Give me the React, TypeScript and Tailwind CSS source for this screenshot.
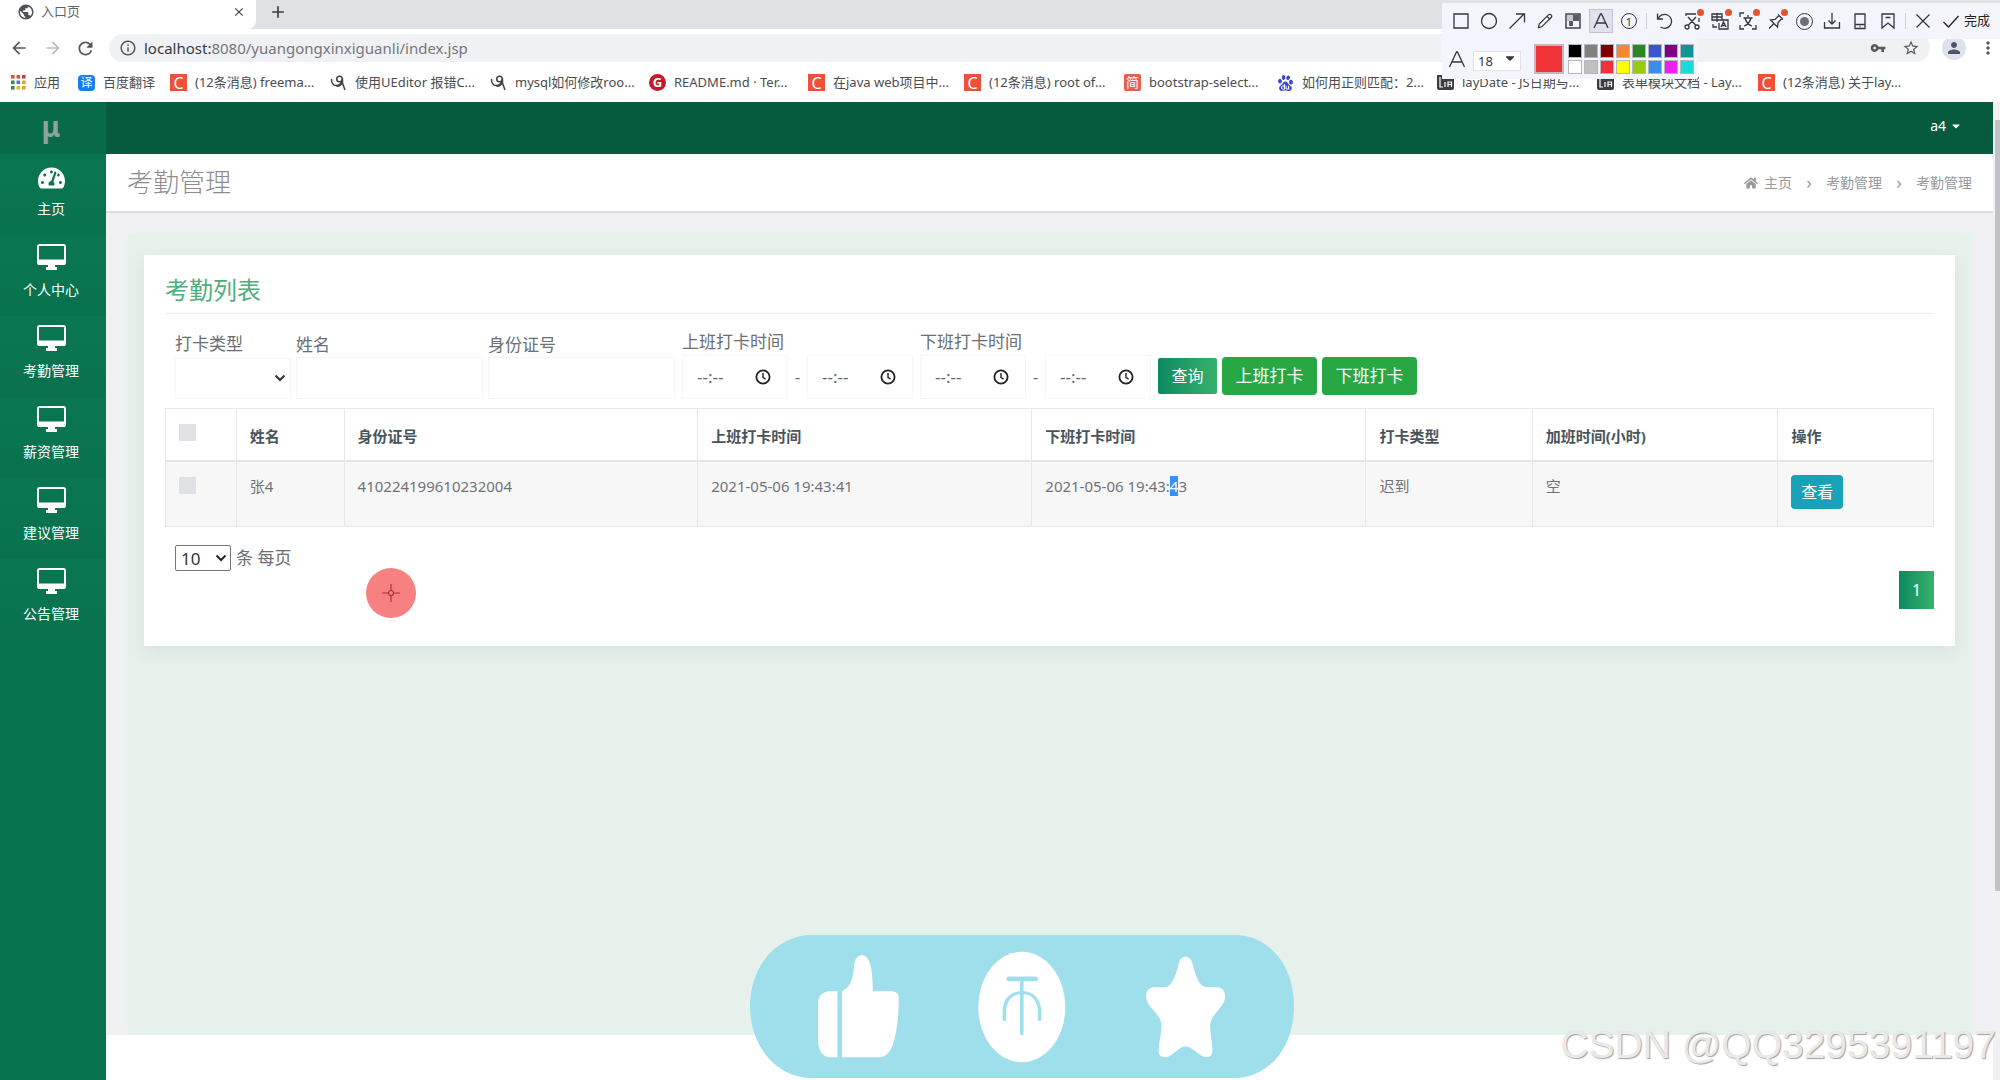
import type { ReactNode } from 'react';
import { Pencil } from 'lucide-react';
import { FaCaretDown, FaHome, FaTachometerAlt } from 'react-icons/fa';
import {
  MdAdd,
  MdArrowBack,
  MdArrowForward,
  MdClose,
  MdInfoOutline,
  MdMoreVert,
  MdPerson,
  MdPublic,
  MdRefresh,
  MdStarBorder,
  MdVpnKey,
} from 'react-icons/md';
import { SiBaidu } from 'react-icons/si';

const DesktopIcon = () => (
  <svg viewBox="0 0 29 26" className="h-[26px] w-[29px]" aria-hidden="true">
    <rect x="1" y="1" width="27" height="19" rx="1.5" fill="none" stroke="#fff" strokeWidth="2" />
    <path d="M1 15.5h27V20a1 1 0 0 1-1 1H2a1 1 0 0 1-1-1z" fill="#fff" />
    <path d="M11 21h7v2h2v3H9v-3h2z" fill="#fff" />
  </svg>
);

const ClockIcon = () => (
  <svg viewBox="0 0 16 16" className="h-4 w-4 shrink-0" fill="none" stroke="#222" strokeWidth="1.8" aria-hidden="true">
    <circle cx="8" cy="8" r="6.6" />
    <path d="M8 4v4.3l2.6 2" strokeWidth="1.4" />
  </svg>
);

/* ---------- bookmark icons ---------- */

const CIcon = () => (
  <span className="flex h-[17px] w-[17px] shrink-0 items-center justify-center bg-[#ee5039] text-base leading-none text-white">C</span>
);

const PawIcon = () => (
  <svg viewBox="0 0 16 16" className="h-4 w-[17px] shrink-0" fill="none" stroke="#444" strokeWidth="1.5" aria-hidden="true">
    <circle cx="9" cy="4" r="2.8" />
    <path d="M1 4c0 4 1.500 6.500 4.500 6.500S12 8 12 3.500V8l2.500 7M5 10.500c3 2 6-1 7-3" />
  </svg>
);

const LayIcon = () => (
  <svg viewBox="0 0 17 17" className="h-[17px] w-[17px] shrink-0" aria-hidden="true">
    <path d="M0 1h6v4h11v9a2 2 0 0 1-2 2H2a2 2 0 0 1-2-2z" fill="#3a3d42" />
    <path d="M3 3v10h3M8 13V8M11 13V8h3.500v5M11 10.500h3.500" stroke="#fff" strokeWidth="1.2" fill="none" />
  </svg>
);

const AppsIcon = () => {
  const dots = ['#d9503f', '#d9503f', '#c0404a', '#3c8a4e', '#4a7fd0', '#d6a92c', '#3c8a4e', '#d6c02c', '#d6a92c'];
  return (
    <svg viewBox="0 0 15 15" className="h-[15px] w-[15px] shrink-0" aria-hidden="true">
      {dots.map((c, i) => (
        <rect key={i} x={(i % 3) * 5.5} y={Math.floor(i / 3) * 5.5} width="3.6" height="3.6" fill={c} />
      ))}
    </svg>
  );
};

type BookmarkItem = { icon: ReactNode; text: string; width: string };

const bookmarks: BookmarkItem[] = [
  { icon: <AppsIcon />, text: '应用', width: 'w-[67px]' },
  {
    icon: <span className="flex h-4 w-[17px] shrink-0 items-center justify-center rounded-sm bg-[#1b7cf0] text-xs leading-none text-white">译</span>,
    text: '百度翻译',
    width: 'w-[92px]',
  },
  { icon: <CIcon />, text: '(12条消息) freema...', width: 'w-[160px]' },
  { icon: <PawIcon />, text: '使用UEditor 报错C...', width: 'w-[160px]' },
  { icon: <PawIcon />, text: 'mysql如何修改roo...', width: 'w-[159px]' },
  {
    icon: <span className="flex h-[17px] w-[17px] shrink-0 items-center justify-center rounded-full bg-[#c2192f] text-[13px] font-bold leading-none text-white">G</span>,
    text: 'README.md · Ter...',
    width: 'w-[159px]',
  },
  { icon: <CIcon />, text: '在java web项目中...', width: 'w-[156px]' },
  { icon: <CIcon />, text: '(12条消息) root of...', width: 'w-[160px]' },
  {
    icon: <span className="flex h-[17px] w-[17px] shrink-0 items-center justify-center rounded-xs bg-[#e5604d] text-[13px] leading-none text-white">简</span>,
    text: 'bootstrap-select...',
    width: 'w-[153px]',
  },
  { icon: <SiBaidu className="h-4 w-[17px] shrink-0 text-[#3a46d8]" />, text: '如何用正则匹配：2...', width: 'w-[160px]' },
  { icon: <LayIcon />, text: 'layDate - JS日期与...', width: 'w-[160px]' },
  { icon: <LayIcon />, text: '表单模块文档 - Lay...', width: 'w-[161px]' },
  { icon: <CIcon />, text: '(12条消息) 关于lay...', width: 'w-[160px]' },
];

const Browser = () => (
  <div className="bg-white">
    <div className="flex h-[29px] bg-[#dfe1e5]">
      <div className="flex w-[256px] items-center rounded-br-lg bg-white pb-[5px] pl-[17px] pr-[10px] text-[13px] text-[#5f6368]">
        <MdPublic className="h-[18px] w-[18px] text-[#50545a]" />
        <span className="ml-[6px] flex-1">入口页</span>
        <button type="button" aria-label="关闭标签页"><MdClose className="h-[14px] w-[14px] text-[#3c4043]" /></button>
      </div>
      <button type="button" aria-label="新标签页" className="ml-3 pb-[5px]"><MdAdd className="h-5 w-5 text-[#3c4043]" /></button>
    </div>
    <div className="flex h-[38px] items-center pl-[9px] pr-[2px] text-[#55585c]">
      <button type="button" aria-label="后退"><MdArrowBack className="h-5 w-5" /></button>
      <button type="button" aria-label="前进" className="ml-[14px]"><MdArrowForward className="h-5 w-5 text-[#bbbdc0]" /></button>
      <button type="button" aria-label="刷新" className="ml-3"><MdRefresh className="h-[21px] w-[21px]" /></button>
      <div className="ml-[13px] flex h-7 flex-1 items-center rounded-full bg-[#f0f1f4] pl-[10px] pr-[10px]">
        <MdInfoOutline className="h-[18px] w-[18px]" />
        <span className="ml-[7px] flex-1 text-[15px] text-[#74777b]">
          <span className="text-[#37393c]">localhost:</span>8080/yuangongxinxiguanli/index.jsp
        </span>
        <MdVpnKey className="h-4 w-4" />
        <MdStarBorder className="ml-4 h-[18px] w-[18px]" />
      </div>
      <span className="ml-3 flex h-6 w-6 items-center justify-center rounded-full bg-[#dfe2ec]">
        <MdPerson className="h-[18px] w-[18px] text-[#4c5467]" />
      </span>
      <MdMoreVert className="ml-3 h-5 w-5" />
    </div>
    <nav className="flex h-[35px] items-center overflow-hidden pb-1 pl-[11px] text-[13px] text-[#4a4c50]">
      {bookmarks.map((b, i) => (
        <a key={i} href="#" className={`flex shrink-0 items-center gap-2 whitespace-nowrap ${b.width}`}>
          {b.icon}
          {b.text}
        </a>
      ))}
    </nav>
  </div>
);

/* ---------- floating annotation toolbar ---------- */

const swatches = [
  'bg-black', 'bg-[#808080]', 'bg-[#800000]', 'bg-[#f58634]', 'bg-[#2c8526]', 'bg-[#3b55d0]', 'bg-[#800080]', 'bg-[#119494]',
  'bg-white', 'bg-[#c0c0c0]', 'bg-[#f03338]', 'bg-[#ffff00]', 'bg-[#99cc11]', 'bg-[#3a8ee6]', 'bg-[#ee1ff0]', 'bg-[#18dbdb]',
];

const Tool = ({ label, dot, active, children }: { label: string; dot?: boolean; active?: boolean; children: ReactNode }) => (
  <button
    type="button"
    aria-label={label}
    className={`relative flex h-[22px] w-[22px] shrink-0 items-center justify-center ${active ? 'bg-[#dfe1ec] outline outline-[#bfc2d0]' : ''}`}
  >
    {children}
    {dot && <span className="absolute -right-px -top-px h-[7px] w-[7px] rounded-full bg-[#e8532b]" />}
  </button>
);

// line drawing on an 18px grid
const Glyph = ({ d }: { d: string }) => (
  <svg viewBox="0 0 18 18" className="h-[18px] w-[18px]" fill="none" stroke="currentColor" strokeWidth="1.3" aria-hidden="true">
    <path d={d} />
  </svg>
);

const Annotator = () => (
  <div className="absolute right-0 top-[3px] w-[558px] text-[#33363f]">
    <div className="flex h-9 items-center gap-[6px] bg-[#f4f5fc] pl-2">
      <Tool label="矩形"><Glyph d="M2 2h14v14H2z" /></Tool>
      <Tool label="椭圆"><Glyph d="M9 1.500a7.500 7.500 0 1 1 0 15a7.500 7.500 0 1 1 0-15z" /></Tool>
      <Tool label="箭头"><Glyph d="M1.500 16.500L16 2M8 2h8.500v8.500" /></Tool>
      <Tool label="画笔"><Pencil className="h-4 w-4" strokeWidth={1.8} /></Tool>
      <Tool label="马赛克">
        <svg viewBox="0 0 16 16" className="h-4 w-4" aria-hidden="true">
          <rect x="1" y="1" width="14" height="14" fill="#f4f5fc" stroke="currentColor" strokeWidth="1.4" />
          <path d="M2 2h6v6H2z" fill="#c9ccd8" />
          <path d="M8 2h6v6H8zM4 8h4v5H4z" fill="currentColor" opacity=".8" />
        </svg>
      </Tool>
      <Tool label="文字" active><Glyph d="M2 16L8.500 2h1L16 16M4.500 11h9" /></Tool>
      <Tool label="序号">
        <span className="flex h-4 w-4 items-center justify-center rounded-full border border-current text-[11px] leading-none">1</span>
      </Tool>
      <span className="h-4 w-px bg-[#d0d3de]" />
      <Tool label="撤销"><Glyph d="M2.500 1.500v5.500H8M3 7a7 7 0 1 1 2.500 8" /></Tool>
      <Tool label="裁剪" dot>
        <Glyph d="M3 4V2h10M16 6v4M5 5l7.500 8M13 5l-7.500 8M6 15a2 2 0 1 1-4 0a2 2 0 1 1 4 0M16 15a2 2 0 1 1-4 0a2 2 0 1 1 4 0" />
      </Tool>
      <Tool label="翻译" dot>
        <Glyph d="M1 2h10v6H1zM6 1v9M1 5h10M11 8h6v9H8v-6M10 15l2.500-5 2.500 5M11 13.500h3M2 12v3h4" />
      </Tool>
      <Tool label="识别文字" dot>
        <Glyph d="M1 5V1h4M1 13v4h4M13 17h4v-4M9 3v2M4.500 6h9M6 6c1 4 4 7 7 8M12 6c-1 4-4 7-7 8" />
      </Tool>
      <Tool label="固定" dot>
        <Glyph d="M11 2.500L16 7.500M12 3.500L8 7.500 3.500 8 10.500 15 11 10.500 15 6.500M7 11.500L2 16.500" />
      </Tool>
      <Tool label="录制">
        <span className="flex h-[17px] w-[17px] items-center justify-center rounded-full border border-current">
          <span className="h-[9px] w-[9px] rounded-full bg-[#6b6e7c]" />
        </span>
      </Tool>
      <Tool label="保存"><Glyph d="M9 1v11M5.500 8.500L9 12l3.500-3.500M1.500 10v6h15v-6" /></Tool>
      <Tool label="发送到手机"><Glyph d="M4 2h10v14.500H4zM4 12.500h10M8.500 14.500h1" /></Tool>
      <Tool label="收藏"><Glyph d="M3 2h12v14l-6-5-6 5zM6.500 5.500h5" /></Tool>
      <span className="h-4 w-px bg-[#d0d3de]" />
      <Tool label="取消"><Glyph d="M2.500 2.500l13 13M15.500 2.500l-13 13" /></Tool>
      <button type="button" className="ml-[2px] flex items-center gap-1 whitespace-nowrap text-[13px] text-[#222]">
        <Glyph d="M1.500 10L6.500 15 16.500 4" />
        完成
      </button>
    </div>
    <div className="flex h-10 w-[255px] items-start bg-[#f4f5fc] pl-[6px]">
      <div className="mt-[11px]"><Glyph d="M1.500 17L8.500 2h1L16.500 17M4 12h10" /></div>
      <label className="relative ml-[7px] mt-[9px]">
        <select aria-label="字号" className="h-5 w-12 appearance-none border border-[#e0e2ea] bg-white pl-1 text-[13px] leading-4">
          <option>18</option>
        </select>
        <FaCaretDown className="pointer-events-none absolute right-1 top-[3px] h-[14px] w-[14px]" />
      </label>
      <button type="button" aria-label="当前颜色" className="ml-[13px] mt-[5px] h-[30px] w-[30px] border-2 border-[#c3b8bd] bg-[#f03338]" />
      <div className="ml-1 mt-[5px] grid grid-cols-8 gap-[2px]">
        {swatches.map((c, i) => (
          <button key={i} type="button" aria-label={`颜色${i + 1}`} className={`h-[14px] w-[14px] border border-[#b5b7c0] ${c}`} />
        ))}
      </div>
    </div>
  </div>
);

/* ---------- page ---------- */

const menu = ['个人中心', '考勤管理', '薪资管理', '建议管理', '公告管理'];

const Sidebar = () => (
  <aside className="w-[106px] shrink-0 bg-[#08744f] text-sm text-white">
    <div className="flex h-[52px] items-center justify-center bg-[#076a49] pb-1 pr-1 text-[28px] font-bold text-[#8fa39b]">μ</div>
    <nav>
      <a href="#" className="flex h-[81px] flex-col items-center bg-linear-to-b from-[#0a7651] to-[#08724e] pr-1 pt-[11px]">
        <FaTachometerAlt className="h-[26px] w-[27px]" />
        <span className="mt-2 leading-5">主页</span>
      </a>
      {menu.map((m) => (
        <a key={m} href="#" className="flex h-[81px] flex-col items-center bg-linear-to-b from-[#0a7651] to-[#08724e] pr-1 pt-[9px]">
          <DesktopIcon />
          <span className="mt-[10px] leading-5">{m}</span>
        </a>
      ))}
    </nav>
  </aside>
);

const TimeInput = ({ id, label }: { id?: string; label: string }) => (
  <span className="flex h-11 w-[106px] items-center border border-[#f4f6f6] pl-[14px] pr-4">
    <input id={id} aria-label={label} placeholder="--:--" className="w-full min-w-0 text-[17px] text-[#666] outline-none placeholder:text-[#666]" />
    <ClockIcon />
  </span>
);

const TimeRange = ({ id, label }: { id: string; label: string }) => (
  <div className="mr-[2px] flex flex-col">
    <label htmlFor={id} className="mb-px leading-6">{label}</label>
    <div className="flex items-center">
      <TimeInput id={id} label={`${label} 开始`} />
      <span className="w-[19px] text-center">-</span>
      <TimeInput label={`${label} 结束`} />
    </div>
  </div>
);

const Filters = () => (
  <form className="flex items-end gap-[5px] pl-[10px] pt-4 text-[17px] text-[#6b6f73]">
    <div className="flex flex-col">
      <label htmlFor="type" className="mb-[2px] leading-6">打卡类型</label>
      <span className="relative">
        <select id="type" className="h-[41px] w-[116px] appearance-none border border-[#f4f6f6] bg-white" />
        <svg viewBox="0 0 12 8" className="pointer-events-none absolute right-[5px] top-4 h-2 w-3" fill="none" stroke="#333" strokeWidth="2" aria-hidden="true">
          <path d="M1.500 1.500L6 6l4.500-4.500" />
        </svg>
      </span>
    </div>
    <div className="flex flex-col">
      <label htmlFor="name" className="leading-6">姓名</label>
      <input id="name" className="h-[42px] w-[187px] border border-[#f4f6f6] px-3" />
    </div>
    <div className="mr-[2px] flex flex-col">
      <label htmlFor="idcard" className="leading-6">身份证号</label>
      <input id="idcard" className="h-[42px] w-[187px] border border-[#f4f6f6] px-3" />
    </div>
    <TimeRange id="on" label="上班打卡时间" />
    <TimeRange id="off" label="下班打卡时间" />
    <button type="button" className="mb-[5px] h-9 w-[59px] rounded-xs bg-linear-to-r from-[#078a60] to-[#36b26c] text-base text-white">查询</button>
    <button type="button" className="mb-1 h-[38px] w-[95px] rounded-sm bg-[#28a745] text-[17px] text-white">上班打卡</button>
    <button type="button" className="mb-1 h-[38px] w-[95px] rounded-sm bg-[#28a745] text-[17px] text-white">下班打卡</button>
  </form>
);

const columns = [
  { name: '姓名', width: 'w-[6.1%]' },
  { name: '身份证号', width: 'w-[20%]' },
  { name: '上班打卡时间', width: 'w-[18.9%]' },
  { name: '下班打卡时间', width: 'w-[18.9%]' },
  { name: '打卡类型', width: 'w-[9.4%]' },
  { name: '加班时间(小时)', width: 'w-[13.9%]' },
  { name: '操作', width: 'w-[8.8%]' },
];

const cell = 'border border-[#e6e8ea] px-[13px] text-left';
const box = 'block h-[17px] w-[17px] appearance-none bg-[#e0e1e4]';

const Records = () => (
  <table className="mt-[9px] w-full table-fixed border-collapse text-[15px] text-[#6f7377]">
    <thead>
      <tr className="h-[52px] border-b-2 border-[#e3e5e7] text-[#47545c]">
        <th className={`${cell} w-[4%] pb-1`}><input type="checkbox" aria-label="全选" className={box} /></th>
        {columns.map((c) => (
          <th key={c.name} className={`${cell} ${c.width} pt-1 font-bold`}>{c.name}</th>
        ))}
      </tr>
    </thead>
    <tbody>
      <tr className="h-[66px] bg-[#f7f7f8] align-top">
        <td className={`${cell} pt-[15px]`}><input type="checkbox" aria-label="选择 张4" className={box} /></td>
        <td className={`${cell} pt-[13px]`}>张4</td>
        <td className={`${cell} pt-[13px]`}>410224199610232004</td>
        <td className={`${cell} pt-[13px]`}>2021-05-06 19:43:41</td>
        <td className={`${cell} pt-[13px]`}>2021-05-06 19:43:<span className="bg-[#3390ff] text-white">4</span>3</td>
        <td className={`${cell} pt-[13px]`}>迟到</td>
        <td className={`${cell} pt-[13px]`}>空</td>
        <td className={`${cell} pt-[13px]`}>
          <button type="button" className="h-[34px] w-[52px] rounded-sm bg-[#17a2b8] text-base text-white">查看</button>
        </td>
      </tr>
    </tbody>
  </table>
);

const Card = () => (
  <section className="bg-white px-[21px] pb-[37px] pt-[17px] shadow-[0_6px_16px_rgba(0,60,40,0.08)]">
    <h2 className="border-b border-[#ececee] pb-[5px] text-2xl leading-9 text-[#4fae7b]">考勤列表</h2>
    <Filters />
    <Records />
    <label className="mt-[18px] flex items-center gap-[5px] pl-[10px] text-[17px] text-[#6b6f73]">
      <span className="relative flex">
        <select className="h-[26px] w-14 appearance-none rounded-xs border border-[#767676] bg-white pl-[5px] leading-none text-[#333]">
          <option>10</option>
        </select>
        <svg viewBox="0 0 12 8" className="pointer-events-none absolute right-1 top-[9px] h-2 w-3" fill="none" stroke="#222" strokeWidth="2" aria-hidden="true">
          <path d="M1.500 1.500L6 6l4.500-4.500" />
        </svg>
      </span>
      条 每页
    </label>
    <div className="flex justify-end">
      <button type="button" className="h-[38px] w-[35px] bg-linear-to-r from-[#078a60] to-[#36b26c] text-base text-white">1</button>
    </div>
  </section>
);

const Main = () => (
  <div className="flex min-w-0 flex-1 flex-col">
    <header className="flex h-[52px] items-center justify-end bg-[#065b3f] pr-[31px] text-sm text-white">
      <button type="button" className="flex items-center gap-1 pb-1">
        a4 <FaCaretDown className="h-3 w-3" />
      </button>
    </header>
    <div className="flex h-[59px] items-center justify-between border-b-2 border-[#dcdfe2] bg-white pl-[21px] pr-[21px]">
      <h1 className="text-[26px] font-light text-[#8d8d8d]">考勤管理</h1>
      <nav className="flex items-center text-sm text-[#97999c]">
        <FaHome className="h-[14px] w-[14px]" />
        <a href="#" className="ml-[6px]">主页</a>
        <span className="w-[34px] pb-[2px] text-center text-lg leading-5">›</span>
        <a href="#">考勤管理</a>
        <span className="w-[34px] pb-[2px] text-center text-lg leading-5">›</span>
        <span>考勤管理</span>
      </nav>
    </div>
    <main className="flex flex-1 bg-[#f0f0f3] pl-[22px] pr-[22px] pt-5">
      <div className="w-full bg-[#e7f1ec] px-4 pt-[22px] shadow-[0_0_8px_#e7f1ec]">
        <Card />
      </div>
    </main>
    <footer className="relative h-[45px] bg-white" />
  </div>
);

const Reactions = () => (
  <svg
    viewBox="77 73 1375 427"
    preserveAspectRatio="none"
    className="absolute bottom-[2px] left-1/2 ml-[22px] h-[143px] w-[544px] -translate-x-1/2"
    aria-hidden="true"
  >
    <path d="M225 73H1310C1395 80 1452 170 1452 286S1395 493 1310 500H225C140 493 77 402 77 286S140 80 225 73z" fill="#9fdfec" />
    <g fill="#fff">
      <path d="M298 241H275C258 245 249 258 249 275V390C250 415 258 432 275 438H298z" />
      <path d="M310 241C330 230 338 205 340 165C342 143 350 132 362 133C380 137 388 175 387 241H435C448 242 453 250 453 262C453 320 448 365 438 400C430 425 420 437 405 438H310z" />
      <ellipse cx="764" cy="288" rx="110" ry="165" />
      <path d="M1178 138C1186 138 1192 145 1195 157C1203 195 1213 228 1232 229H1258C1275 229 1283 250 1274 275C1262 300 1240 315 1240 345C1240 370 1246 395 1246 418C1245 433 1240 438 1230 438C1215 438 1195 405 1178 405S1143 438 1128 438C1115 438 1110 433 1110 418C1110 395 1117 370 1117 345C1117 315 1095 300 1082 275C1073 250 1081 229 1098 229H1124C1143 228 1153 195 1161 157C1164 145 1170 138 1178 138z" />
    </g>
    <g fill="none" stroke="#9fdfec" strokeLinecap="round">
      <path d="M732 204H798" strokeWidth="14" />
      <path d="M764 204V368M720 325V298C722 262 740 245 764 245S806 262 809 298V325" strokeWidth="9" />
    </g>
  </svg>
);

export default function App() {
  return (
    <div className="relative flex min-h-screen flex-col overflow-hidden font-['Noto_Sans','Noto_Sans_CJK_SC',sans-serif]">
      <Browser />
      <Annotator />
      <div className="flex flex-1">
        <Sidebar />
        <Main />
        <div className="w-[7px] shrink-0 bg-[#f1f1f3] pl-[2px] pt-[18px]">
          <div className="h-[771px] bg-[#c1c2c5]" />
        </div>
      </div>

      {/* click marker */}
      <div className="absolute left-[366px] top-[568px] flex h-[50px] w-[50px] items-center justify-center rounded-full bg-[#f78080]">
        <svg viewBox="0 0 18 18" className="h-[18px] w-[18px]" fill="none" stroke="#a8323a" strokeWidth="1.2" aria-hidden="true">
          <circle cx="9" cy="9" r="2.5" />
          <path d="M9 0v6.500M9 11.500V18M0 9h6.500M11.500 9H18" />
        </svg>
      </div>
      <Reactions />
      <div className="absolute bottom-4 right-1 font-['Liberation_Sans',sans-serif] text-[39px] leading-none text-[#e9e9e9] [text-shadow:1px_1px_1px_#a0a0a0]">
        CSDN @QQ3295391197
      </div>
    </div>
  );
}
